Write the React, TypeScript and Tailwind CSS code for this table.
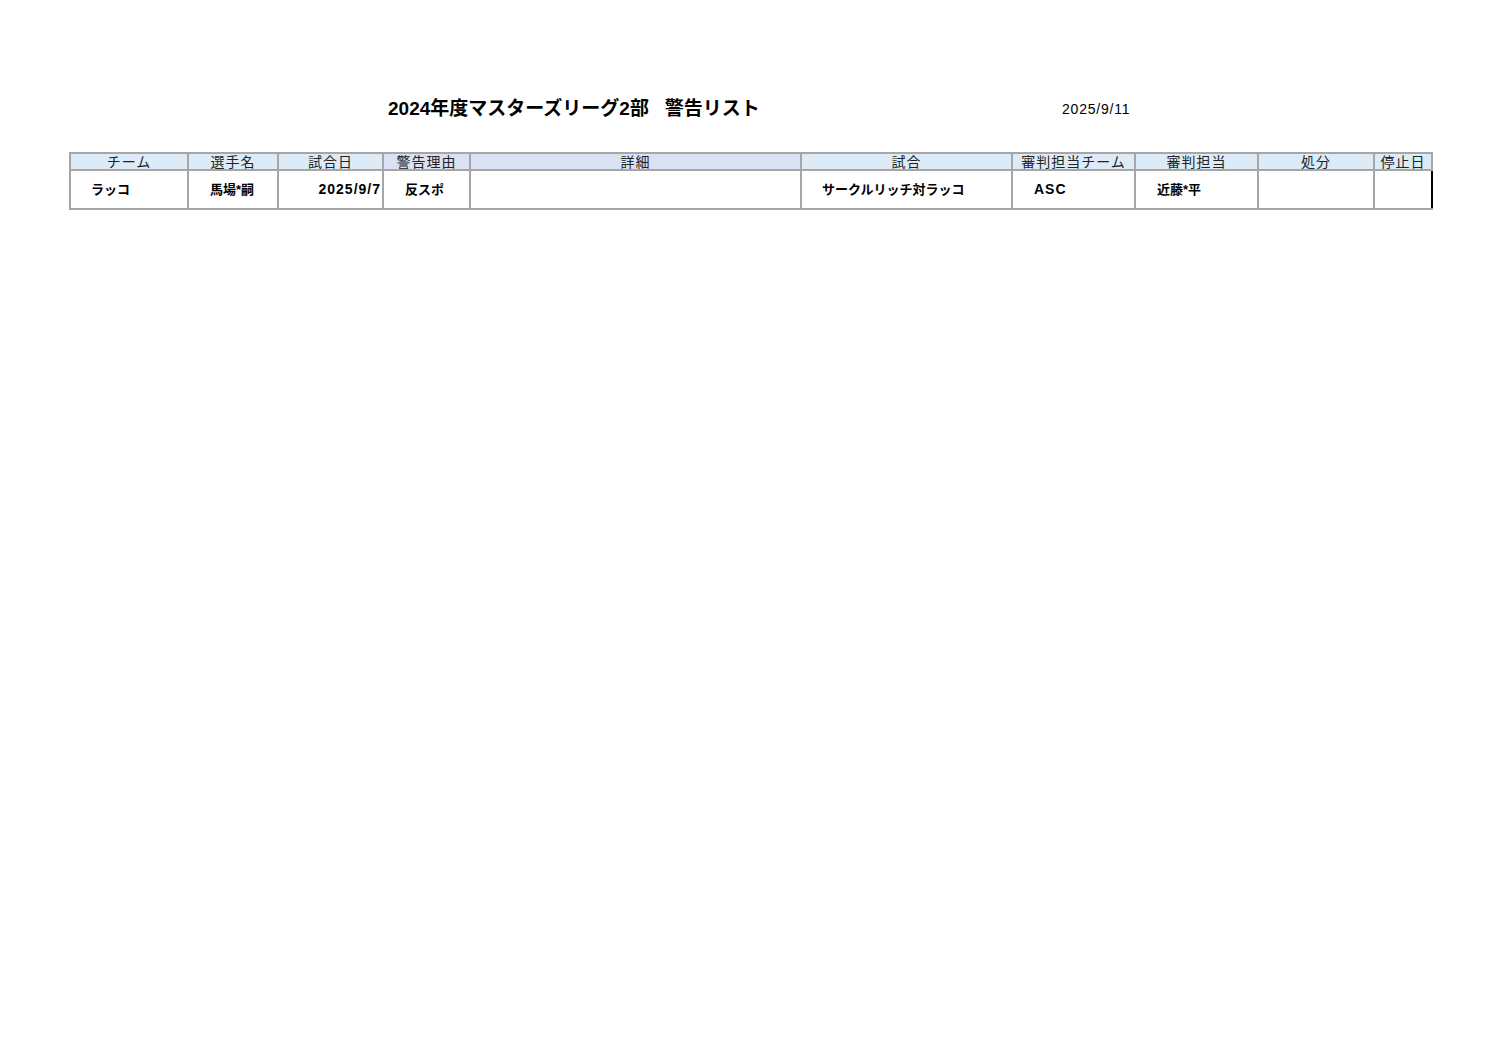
const FONT = {
  fontFamily: '"Liberation Sans", "Noto Sans CJK JP", sans-serif',
};

type Col = { key: string; header: string; width: number; tint?: boolean };

const columns: Col[] = [
  { key: "team", header: "チーム", width: 118 },
  { key: "player", header: "選手名", width: 90 },
  { key: "date", header: "試合日", width: 105 },
  { key: "reason", header: "警告理由", width: 87, tint: true },
  { key: "detail", header: "詳細", width: 331, tint: true },
  { key: "match", header: "試合", width: 211 },
  { key: "refTeam", header: "審判担当チーム", width: 123 },
  { key: "ref", header: "審判担当", width: 123 },
  { key: "penalty", header: "処分", width: 116 },
  { key: "suspend", header: "停止日", width: 58 },
];

const rows = [
  {
    team: "ラッコ",
    player: "馬場*嗣",
    date: "2025/9/7",
    reason: "反スポ",
    detail: "",
    match: "サークルリッチ対ラッコ",
    refTeam: "ASC",
    ref: "近藤*平",
    penalty: "",
    suspend: "",
  },
];

const cell = "border-2 border-[#a6a6a6] text-[13px] font-bold";

export default function App() {
  return (
    <div className="min-h-[1058px] w-[1497px] bg-white text-black" style={FONT}>
      <div className="flex items-center pl-[388px] pt-[97px]">
        <div className="w-[674px] text-[19px] font-bold leading-[24px]">
          2024年度マスターズリーグ2部&nbsp;&nbsp;&nbsp;警告リスト
        </div>
        <div className="text-[14px] leading-[24px] tracking-[0.8px]">2025/9/11</div>
      </div>

      <div className="pl-[69px] pt-[31px]">
        <table className="table-fixed border-collapse">
          <colgroup>
            {columns.map((c) => (
              <col key={c.key} style={{ width: c.width }} />
            ))}
          </colgroup>
          <thead>
            <tr className="h-[17px]">
              {columns.map((c) => (
                <th
                  key={c.key}
                  className={
                    "border-2 border-[#a6a6a6] p-0 text-center text-[14px] font-normal leading-[14px] tracking-[1px] text-[#222] " +
                    (c.tint ? "bg-[#d9e1f2]" : "bg-[#ddebf7]")
                  }
                >
                  {c.header}
                </th>
              ))}
            </tr>
          </thead>
          <tbody>
            {rows.map((r, i) => (
              <tr key={i} className="h-[39px]">
                <td className={cell + " pl-[20px]"}>{r.team}</td>
                <td className={cell + " pl-[21px]"}>{r.player}</td>
                <td className={cell + " pr-[1px] text-right text-[14px] tracking-[1px]"}>{r.date}</td>
                <td className={cell + " pl-[21px]"}>{r.reason}</td>
                <td className={cell}>{r.detail}</td>
                <td className={cell + " pl-[20px]"}>{r.match}</td>
                <td className={cell + " pl-[21px] text-[14px] tracking-[1px]"}>{r.refTeam}</td>
                <td className={cell + " pl-[21px]"}>{r.ref}</td>
                <td className={cell + " border-l-black"}>{r.penalty}</td>
                <td className={cell + " border-r-black"}>{r.suspend}</td>
              </tr>
            ))}
          </tbody>
        </table>
      </div>
    </div>
  );
}
